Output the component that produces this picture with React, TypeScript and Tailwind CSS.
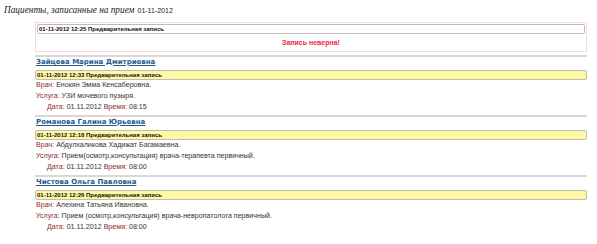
import React from "react";

const entries = [
  {
    name: "Зайцева Марина Дмитриевна",
    stamp: "01-11-2012 12:33 Предварительная запись",
    doctor: "Енокян Эмма Кенсаберовна.",
    service: "УЗИ мочевого пузыря.",
    date: "01.11.2012",
    time: "08:15",
  },
  {
    name: "Романова Галина Юрьевна",
    stamp: "01-11-2012 12:18 Предварительная запись",
    doctor: "Абдулхаликова Хадижат Багамаевна.",
    service: "Прием(осмотр,консультация) врача-терапевта первичный.",
    date: "01.11.2012",
    time: "08:00",
  },
  {
    name: "Чистова Ольга Павловна",
    stamp: "01-11-2012 12:26 Предварительная запись",
    doctor: "Алехина Татьяна Ивановна.",
    service: "Прием (осмотр,консультация) врача-невропатолога первичный.",
    date: "01.11.2012",
    time: "08:00",
  },
];

function Bar({ text }: { text: string }) {
  return (
    <div className="h-[10px] border border-[#bdbdb0] bg-[#fff9a6] rounded-[2px] flex items-center pl-[1px] text-[6px] font-bold text-[#111] leading-none font-['Liberation_Sans',sans-serif]">
      {text}
    </div>
  );
}

export default function App() {
  return (
    <div className="w-[597px] h-[244px] bg-white overflow-hidden">
      <div className="h-[22px] pl-[4px] pb-[1px] flex items-center leading-none text-[#222]">
        <span className="italic text-[9.3px] font-['Liberation_Serif',serif]">
          Пациенты, записанные на прием
        </span>
        <span className="ml-[3px] text-[7px] font-['Liberation_Sans',sans-serif]">01-11-2012</span>
      </div>
      <div className="ml-[35px] w-[552px]">
        <div className="h-[30px] border border-[#fbd9d9] p-[1px] flex flex-col">
          <div className="h-[10px] border border-[#bcbcbc] bg-white rounded-[2px] flex items-center pl-[1px] text-[6px] font-bold text-[#111] leading-none font-['Liberation_Sans',sans-serif]">
            01-11-2012 12:25 Предварительная запись
          </div>
          <div className="flex-1 flex items-center justify-center text-[7px] font-bold text-[#f2253c] font-['Liberation_Sans',sans-serif] pt-[2px]">
            Запись неверна!
          </div>
        </div>
        <div className="mt-[3px]">
          {entries.map((e, i) => (
            <div key={i} className="border-t-2 border-[#d8d8d8] pb-[2px]">
              <div className="h-[10px] flex items-center pl-[1px] font-['DejaVu_Sans',sans-serif] text-[7px] font-bold text-[#245b8a] underline leading-none">
                {e.name}
              </div>
              <div className="mt-[3px]">
                <Bar text={e.stamp} />
              </div>
              <div className="font-['Liberation_Sans',sans-serif] text-[7.1px] leading-[11px] text-[#333] pl-[1px]">
                <div>
                  <span className="text-[#8c2b2b]">Врач:</span> {e.doctor}
                </div>
                <div>
                  <span className="text-[#8c2b2b]">Услуга:</span> {e.service}
                </div>
                <div className="pl-[11px]">
                  <span className="text-[#8c2b2b]">Дата:</span> {e.date}{" "}
                  <span className="text-[#8c2b2b]">Время:</span> {e.time}
                </div>
              </div>
            </div>
          ))}
        </div>
      </div>
    </div>
  );
}
